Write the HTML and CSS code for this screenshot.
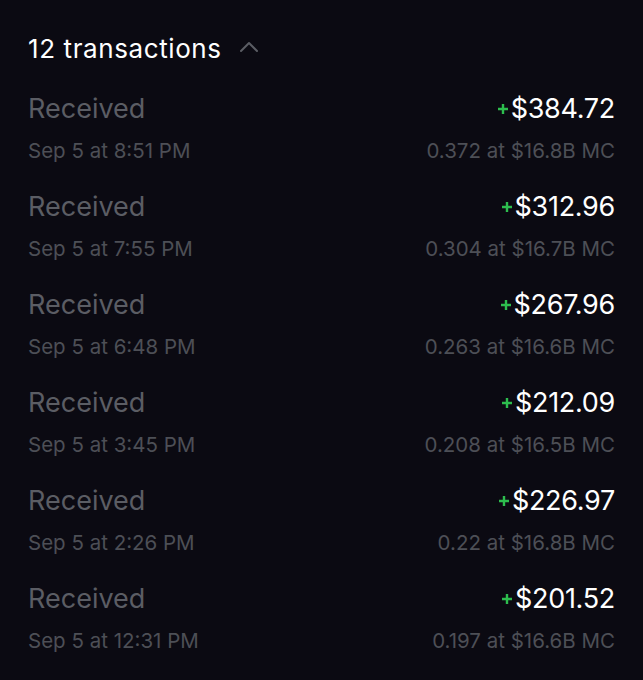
FILE: index.html
```html
<!DOCTYPE html>
<html>
<head>
  <title>Transactions</title>
  <link rel="stylesheet" href="styles.css">
</head>
<body>
  <div class="panel">
    <div class="head">
      <span>12 transactions</span>
      <svg class="chev" width="20" height="12" viewBox="0 0 20 12"><path d="M2 10 L10 2 L18 10" fill="none" stroke="#5b5d64" stroke-width="2" stroke-linecap="round" stroke-linejoin="round"/></svg>
    </div>

    <div class="tx">
      <div class="line1"><span class="label">Received</span><span class="amt"><svg class="plus" viewBox="0 0 10 10"><path d="M5 0V10M0 5H10"/></svg>$384.72</span></div>
      <div class="line2"><span>Sep 5 at 8:51 PM</span><span>0.372 at $16.8B MC</span></div>
    </div>
    <div class="tx">
      <div class="line1"><span class="label">Received</span><span class="amt"><svg class="plus" viewBox="0 0 10 10"><path d="M5 0V10M0 5H10"/></svg>$312.96</span></div>
      <div class="line2"><span>Sep 5 at 7:55 PM</span><span>0.304 at $16.7B MC</span></div>
    </div>
    <div class="tx">
      <div class="line1"><span class="label">Received</span><span class="amt"><svg class="plus" viewBox="0 0 10 10"><path d="M5 0V10M0 5H10"/></svg>$267.96</span></div>
      <div class="line2"><span>Sep 5 at 6:48 PM</span><span>0.263 at $16.6B MC</span></div>
    </div>
    <div class="tx">
      <div class="line1"><span class="label">Received</span><span class="amt"><svg class="plus" viewBox="0 0 10 10"><path d="M5 0V10M0 5H10"/></svg>$212.09</span></div>
      <div class="line2"><span>Sep 5 at 3:45 PM</span><span>0.208 at $16.5B MC</span></div>
    </div>
    <div class="tx">
      <div class="line1"><span class="label">Received</span><span class="amt"><svg class="plus" viewBox="0 0 10 10"><path d="M5 0V10M0 5H10"/></svg>$226.97</span></div>
      <div class="line2"><span>Sep 5 at 2:26 PM</span><span>0.22 at $16.8B MC</span></div>
    </div>
    <div class="tx">
      <div class="line1"><span class="label">Received</span><span class="amt"><svg class="plus" viewBox="0 0 10 10"><path d="M5 0V10M0 5H10"/></svg>$201.52</span></div>
      <div class="line2"><span>Sep 5 at 12:31 PM</span><span>0.197 at $16.6B MC</span></div>
    </div>
  </div>
</body>
</html>
```

FILE: styles.css
```css
body { margin: 0; background: #0b0a12; font-family: Inter, "Liberation Sans", sans-serif; }
.panel { padding: 28px 28px 0 28px; }
.head { display: flex; align-items: center; gap: 17px; height: 40px; margin-bottom: 23px; color: #fff; font-size: 26px; letter-spacing: 0.6px; }
.chev { margin-top: -2px; }
.tx { padding-bottom: 24px; }
.line1, .line2 { display: flex; justify-content: space-between; align-items: center; }
.line1 { height: 34px; margin-bottom: 10px; font-size: 27px; }
.line2 { height: 30px; font-size: 20.5px; color: #4d4f56; }
.label { color: #5b5d64; }
.amt { display: flex; align-items: center; color: #fff; letter-spacing: -0.3px; }
.plus { width: 10px; height: 10px; margin-right: 3px; margin-top: 1px; stroke: #2dbd4e; stroke-width: 2.4; fill: none; }
```
